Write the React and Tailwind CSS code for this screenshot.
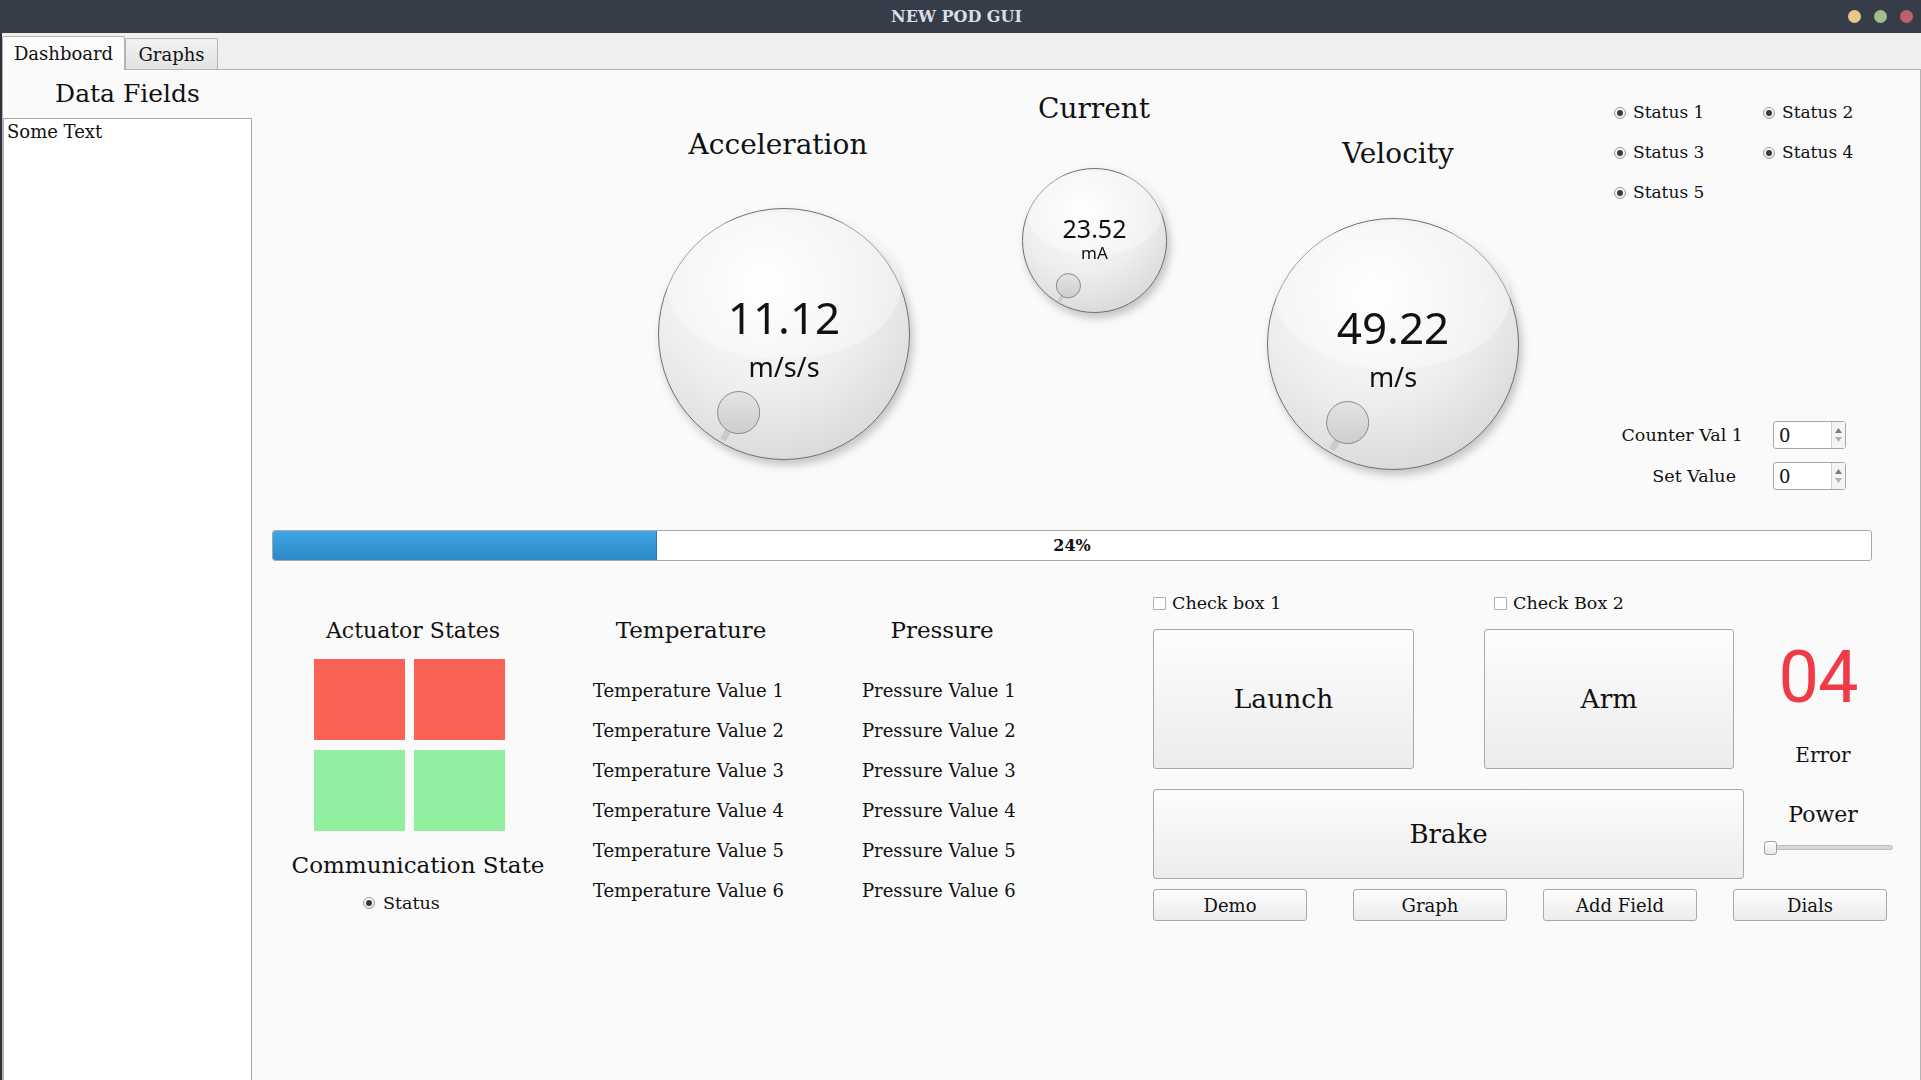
import React from 'react';

const Radio = () => (
  <span className="w-[12px] h-[12px] shrink-0 rounded-full border border-[#9a9a9a] bg-linear-to-b from-white to-[#e6e6e6] flex items-center justify-center">
    <span className="w-[6px] h-[6px] rounded-full bg-[#3a3a3a]" />
  </span>
);

const Checkbox = () => (
  <span className="w-[13px] h-[13px] shrink-0 border border-[#b0b0b0] bg-white rounded-[1px]" />
);

const Dial = ({ id, size, value, unit, valueSize, valueY, unitSize, unitY }) => {
  const r = size / 2;
  const kr = r * 0.167;
  const a = (120 * Math.PI) / 180;
  const kx = r + Math.cos(a) * r * 0.72;
  const ky = r + Math.sin(a) * r * 0.72;
  const n1 = r * 0.72 + kr;
  const n2 = r * 0.97;
  return (
    <svg
      width={size}
      height={size}
      viewBox={`0 0 ${size} ${size}`}
      className="overflow-visible drop-shadow-[3px_5px_4px_rgba(0,0,0,0.22)]"
    >
      <defs>
        <radialGradient id={`face-${id}`} cx="42%" cy="30%" r="78%">
          <stop offset="0" stopColor="#ffffff" />
          <stop offset="0.55" stopColor="#eeeeee" />
          <stop offset="1" stopColor="#d6d6d6" />
        </radialGradient>
        <linearGradient id={`knob-${id}`} x1="0" y1="0" x2="0" y2="1">
          <stop offset="0" stopColor="#e4e4e4" />
          <stop offset="1" stopColor="#cdcdcd" />
        </linearGradient>
      </defs>
      <circle cx={r} cy={r} r={r - 0.5} fill={`url(#face-${id})`} stroke="#6f6f6f" strokeWidth="1" />
      <ellipse cx={r} cy={r * 0.62} rx={r * 0.93} ry={r * 0.58} fill="#ffffff" opacity="0.35" />
      <line
        x1={r + Math.cos(a) * n1}
        y1={r + Math.sin(a) * n1}
        x2={r + Math.cos(a) * n2}
        y2={r + Math.sin(a) * n2}
        stroke="#cbcbcb"
        strokeWidth={r * 0.05}
      />
      <circle cx={kx} cy={ky} r={kr} fill={`url(#knob-${id})`} stroke="#8a8a8a" strokeWidth="1" />
      <text
        x={r}
        y={r + valueY}
        fontSize={valueSize}
        textAnchor="middle"
        dominantBaseline="central"
        fontFamily="'Noto Sans', sans-serif"
        fill="#111"
      >
        {value}
      </text>
      <text
        x={r}
        y={r + unitY}
        fontSize={unitSize}
        textAnchor="middle"
        dominantBaseline="central"
        fontFamily="'Noto Sans', sans-serif"
        fill="#111"
      >
        {unit}
      </text>
    </svg>
  );
};

const SpinBox = () => (
  <div className="w-[73px] h-[28px] border border-[#a7a7a7] rounded-[3px] bg-white flex">
    <div className="flex-1 flex items-center pl-[5px] text-[18px]">0</div>
    <div className="w-[14px] border-l border-[#d0d0d0] bg-[#f4f4f4] flex flex-col items-center justify-center gap-[4px]">
      <svg width="7" height="5" viewBox="0 0 7 5"><path d="M3.5 0 L7 5 L0 5 Z" fill="#7a7a7a" /></svg>
      <svg width="7" height="5" viewBox="0 0 7 5"><path d="M0 0 L7 0 L3.5 5 Z" fill="#b0b0b0" /></svg>
    </div>
  </div>
);

const Button = ({ className, textClass, children }) => (
  <div
    className={`border border-[#a9a9a9] rounded-[3px] bg-linear-to-b from-[#fdfdfd] to-[#ececec] flex items-center justify-center ${className}`}
  >
    <span className={textClass}>{children}</span>
  </div>
);

const App = () => {
  const temps = [1, 2, 3, 4, 5, 6];
  return (
    <div className="w-[1921px] h-[1080px] flex flex-col bg-[#fafafa] overflow-hidden font-['DejaVu_Serif',serif] text-[#111]">
      {/* title bar */}
      <div className="h-[33px] bg-[#373c49] flex items-center shrink-0">
        <div className="flex-1" />
        <div className="text-[#d8dee9] font-bold text-[16px]">NEW POD GUI</div>
        <div className="flex-1 flex justify-end items-center gap-[13px] pr-[8px]">
          <span className="w-[13px] h-[13px] rounded-full bg-[#e8c987]" />
          <span className="w-[13px] h-[13px] rounded-full bg-[#a3be8c]" />
          <span className="w-[13px] h-[13px] rounded-full bg-[#bf616a]" />
        </div>
      </div>

      <div className="flex-1 flex flex-col border-l-2 border-[#2e323c]">
        {/* tabs */}
        <div className="h-[36px] bg-[#efefef] flex items-end shrink-0">
          <div className="w-[123px] h-[34px] -mb-px relative z-10 border border-b-0 border-[#b4b4b4] bg-[#fbfbfb] rounded-t-[2px] flex items-center justify-center text-[18px]">
            Dashboard
          </div>
          <div className="w-[93px] h-[31px] border border-b-0 border-[#b4b4b4] bg-linear-to-b from-[#f2f2f2] to-[#e2e2e2] rounded-t-[2px] flex items-center justify-center text-[18px]">
            Graphs
          </div>
        </div>

        {/* panel */}
        <div className="flex-1 flex border-t border-r border-l border-[#b4b4b4] bg-[#fafafa]">
          {/* left column */}
          <div className="w-[249px] flex flex-col shrink-0">
            <div className="h-[48px] flex items-center justify-center text-[25px]">Data Fields</div>
            <div className="flex-1 bg-white border border-b-0 border-[#ababab] px-[3px] text-[18px] leading-[26px]">
              Some Text
            </div>
          </div>

          {/* right area */}
          <div className="flex-1 flex flex-col">
            {/* gauges row */}
            <div className="h-[460px] flex shrink-0">
              <div className="ml-[402px] w-[260px] flex flex-col items-center pt-[57px]">
                <div className="h-[36px] mr-[12px] flex items-center text-[28px] whitespace-nowrap">Acceleration</div>
                <div className="mt-[45px]">
                  <Dial id="acc" size={252} value="11.12" unit="m/s/s" valueSize={44} valueY={-17} unitSize={27} unitY={32} />
                </div>
              </div>
              <div className="ml-[100px] w-[160px] flex flex-col items-center pt-[21px]">
                <div className="h-[36px] flex items-center text-[28px]">Current</div>
                <div className="mt-[41px]">
                  <Dial id="cur" size={145} value="23.52" unit="mA" valueSize={25} valueY={-13} unitSize={17} unitY={12} />
                </div>
              </div>
              <div className="ml-[89px] w-[260px] flex flex-col items-center pt-[66px]">
                <div className="h-[36px] ml-[10px] flex items-center text-[28px]">Velocity</div>
                <div className="mt-[46px]">
                  <Dial id="vel" size={252} value="49.22" unit="m/s" valueSize={44} valueY={-17} unitSize={27} unitY={32} />
                </div>
              </div>
              <div className="flex-1 flex flex-col">
                <div className="ml-[91px] mt-[23px] grid grid-cols-[149px_149px]">
                  {['Status 1', 'Status 2', 'Status 3', 'Status 4', 'Status 5'].map((s) => (
                    <div key={s} className="h-[40px] flex items-center gap-[7px] text-[17px]">
                      <Radio />
                      <span>{s}</span>
                    </div>
                  ))}
                </div>
                <div className="mt-[208px] flex flex-col gap-[13px]">
                  {['Counter Val 1', 'Set Value'].map((l, i) => (
                    <div key={l} className="flex items-center">
                      <div className={`text-right text-[17.5px] whitespace-nowrap ${i === 0 ? 'w-[220px]' : 'w-[213px] mr-[7px]'}`}>{l}</div>
                      <div className="ml-[30px]">
                        <SpinBox />
                      </div>
                    </div>
                  ))}
                </div>
              </div>
            </div>

            {/* progress bar */}
            <div className="ml-[20px] w-[1600px] h-[31px] border border-[#a8a8a8] rounded-[3px] bg-white flex relative shrink-0">
              <div className="w-[384px] h-full bg-linear-to-b from-[#3ea6ea] to-[#2d88c6] border-r border-[#2a7ab3] rounded-l-[2px]" />
              <div className="absolute inset-0 flex items-center justify-center font-bold text-[16px]">24%</div>
            </div>

            {/* bottom section */}
            <div className="flex">
              <div className="ml-[48px] w-[226px] flex flex-col items-center pt-[53px]">
                <div className="h-[32px] flex items-center text-[22px] whitespace-nowrap">Actuator States</div>
                <div className="mt-[13px] self-start ml-[14px] grid grid-cols-[91px_91px] grid-rows-[81px_81px] gap-x-[9px] gap-y-[10px]">
                  <div className="bg-[#f96254]" />
                  <div className="bg-[#f96254]" />
                  <div className="bg-[#90ee9e]" />
                  <div className="bg-[#90ee9e]" />
                </div>
                <div className="mt-[18px] ml-[10px] h-[32px] flex items-center text-[23px] whitespace-nowrap">Communication State</div>
                <div className="mt-[10px] h-[24px] self-start ml-[63px] flex items-center gap-[8px] text-[17.5px]">
                  <Radio />
                  <span>Status</span>
                </div>
              </div>

              <div className="ml-[67px] w-[196px] flex flex-col pt-[53px]">
                <div className="h-[32px] flex items-center justify-center text-[23px] whitespace-nowrap">Temperature</div>
                <div className="mt-[24px] flex flex-col">
                  {temps.map((n) => (
                    <div key={n} className="h-[40px] flex items-center text-[18px] whitespace-nowrap">
                      Temperature Value {n}
                    </div>
                  ))}
                </div>
              </div>

              <div className="ml-[73px] w-[160px] flex flex-col pt-[53px]">
                <div className="h-[32px] flex items-center justify-center text-[23px]">Pressure</div>
                <div className="mt-[24px] flex flex-col">
                  {temps.map((n) => (
                    <div key={n} className="h-[40px] flex items-center text-[18px] whitespace-nowrap">
                      Pressure Value {n}
                    </div>
                  ))}
                </div>
              </div>

              <div className="ml-[131px] flex flex-col">
                <div className="mt-[32px] h-[20px] flex items-center text-[17.5px]">
                  <div className="w-[341px] flex items-center gap-[6px]">
                    <Checkbox />
                    <span>Check box 1</span>
                  </div>
                  <div className="flex items-center gap-[6px]">
                    <Checkbox />
                    <span>Check Box 2</span>
                  </div>
                </div>

                <div className="mt-[16px] flex h-[140px]">
                  <Button className="w-[261px] h-[140px]" textClass="text-[26.5px]">Launch</Button>
                  <Button className="ml-[70px] w-[250px] h-[140px]" textClass="text-[26.5px]">Arm</Button>
                  <div className="ml-[14px] w-[150px] flex flex-col items-center">
                    <div className="mt-[13px] pr-[10px] text-[72px] leading-none text-[#ef3a47] font-['Roboto',sans-serif] tracking-[-1px]">04</div>
                    <div className="mt-[27px] h-[28px] flex items-center text-[20px]">Error</div>
                  </div>
                </div>

                <div className="mt-[20px] flex h-[90px]">
                  <Button className="w-[591px] h-[90px]" textClass="text-[26px]">Brake</Button>
                  <div className="ml-[4px] w-[150px] flex flex-col">
                    <div className="mt-[9px] h-[32px] flex items-center justify-center text-[22px]">Power</div>
                    <div className="mt-[15px] ml-[16px] w-[129px] h-[5px] rounded-full bg-[#d8d8d8] border border-[#bcbcbc] relative">
                      <div className="absolute -left-px -top-[5px] w-[13px] h-[14px] rounded-[3px] border border-[#a0a0a0] bg-linear-to-b from-white to-[#e8e8e8]" />
                    </div>
                  </div>
                </div>

                <div className="mt-[10px] flex">
                  <Button className="w-[154px] h-[32px]" textClass="text-[18px]">Demo</Button>
                  <Button className="ml-[46px] w-[154px] h-[32px]" textClass="text-[18px]">Graph</Button>
                  <Button className="ml-[36px] w-[154px] h-[32px]" textClass="text-[18px]">Add Field</Button>
                  <Button className="ml-[36px] w-[154px] h-[32px]" textClass="text-[18px]">Dials</Button>
                </div>
              </div>
            </div>
          </div>
        </div>
      </div>
    </div>
  );
};

export default App;
